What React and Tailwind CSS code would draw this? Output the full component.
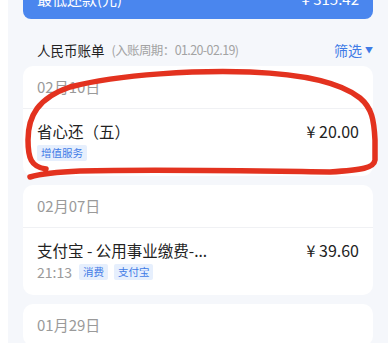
import React from "react";

const bills = [
  {
    date: "02月10日",
    items: [{ title: "省心还（五）", amount: "¥ 20.00", time: "", tags: ["增值服务"] }],
  },
  {
    date: "02月07日",
    items: [{ title: "支付宝 - 公用事业缴费-...", amount: "¥ 39.60", time: "21:13", tags: ["消费", "支付宝"] }],
  },
  { date: "01月29日", items: [] },
];

const Tag = ({ children }) => (
  <span className="inline-flex h-[16px] items-center rounded-[2px] bg-[#e6effd] px-[4px] text-[10.5px] leading-none text-[#3f7be6]">
    {children}
  </span>
);

const BillCard = ({ bill }) => (
  <div className="overflow-hidden rounded-[10px] bg-white">
    <div className="flex h-[42px] items-center px-[14px] text-[15px] text-[#9a9a9a]">{bill.date}</div>
    {bill.items.map((item) => (
      <div key={item.title} className="border-t border-[#f0f1f4] px-[14px] pt-[11px] pb-[14px]">
        <div className="flex items-center justify-between">
          <span className="text-[15.5px] leading-[22px] text-[#222]">{item.title}</span>
          <span className="text-[16px] leading-[22px] text-[#222]">{item.amount}</span>
        </div>
        <div className="mt-[2px] flex h-[18px] items-center gap-[6px]">
          {item.time && <span className="mr-[1px] text-[14px] text-[#9a9a9a]">{item.time}</span>}
          {item.tags.map((t) => (
            <Tag key={t}>{t}</Tag>
          ))}
        </div>
      </div>
    ))}
  </div>
);

export default function App() {
  return (
    <div
      className="relative h-[343px] w-[390px] overflow-hidden bg-white"
      style={{ fontFamily: '"Noto Sans CJK SC", "Noto Sans", sans-serif' }}
    >
      <div className="ml-[8px] mr-[2px] flex h-full flex-col bg-[#f5f7fb] px-[15px]">
        {/* top summary card, mostly scrolled off */}
        <div className="-mt-[41px] flex h-[60px] shrink-0 items-end justify-between rounded-[8px] bg-[#4a86ee] px-[14px] pb-[10px] text-[15px] leading-[20px] text-white">
          <span>最低还款(元)</span>
          <span>¥ 315.42</span>
        </div>

        {/* header */}
        <div className="flex h-[47px] shrink-0 items-start justify-between pt-[21px]">
          <div className="flex items-center pl-[14px] leading-[20px]">
            <span className="text-[13.5px] text-[#222]">人民币账单</span>
            <span className="ml-[7px] text-[12.5px] tracking-[-0.6px] text-[#a3a3a3]">(入账周期：01.20-02.19)</span>
          </div>
          <div className="flex items-center gap-[3px] text-[14px] leading-[20px] text-[#3f7be6]">
            <span>筛选</span>
            <span className="text-[8px]">▼</span>
          </div>
        </div>

        <div className="flex flex-col gap-[9px]">
          {bills.map((b) => (
            <BillCard key={b.date} bill={b} />
          ))}
        </div>
      </div>

      {/* red hand-drawn circle */}
      <svg className="pointer-events-none absolute left-0 top-0" width="390" height="343">
        <path
          d="M46 169 C31 167 28 158 28 140 C28 116 38 98 70 87 C120 74 200 70 250 72 C300 74 340 82 360 98 C372 108 374 120 375 140 L375 160 C374 168 362 170 330 172 C260 171 160 169 80 171 C55 172 40 174 30 177"
          fill="none"
          stroke="#e3321f"
          strokeWidth="5.5"
          strokeLinecap="round"
          strokeLinejoin="round"
        />
      </svg>
    </div>
  );
}
